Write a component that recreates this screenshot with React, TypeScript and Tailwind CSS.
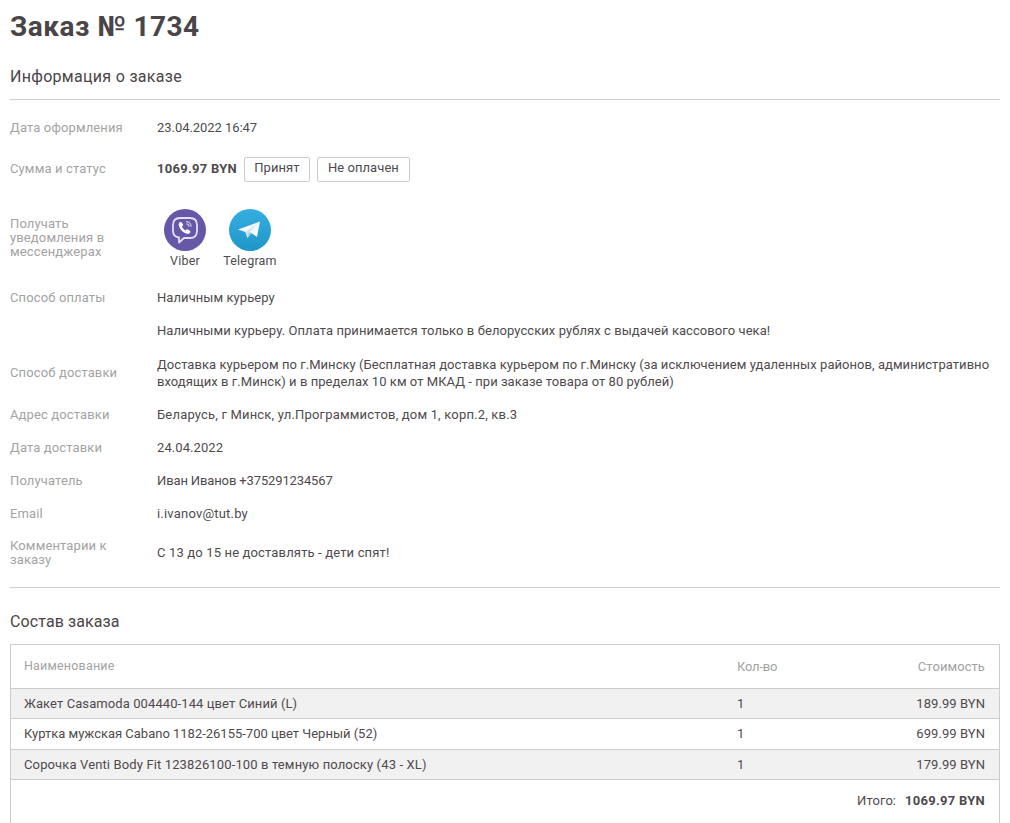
const rowLabel = "w-[147px] shrink-0 pr-[20px] text-[13px] leading-[14px] text-[#a3a3a3] tracking-[0.13px]";

const Row = ({
  label,
  height,
  tracking = "tracking-[0.07px]",
  children,
}: {
  label: string;
  height: string;
  tracking?: string;
  children: React.ReactNode;
}) => (
  <div className={`flex items-center ${height}`}>
    <div className={rowLabel}>{label}</div>
    <div className={`flex-1 text-[13px] leading-[17px] text-[#4f4a4d] ${tracking}`}>{children}</div>
  </div>
);

const items = [
  { name: "Жакет Casamoda 004440-144 цвет Синий (L)", qty: 1, price: "189.99 BYN", tracking: "tracking-[0.09px]" },
  { name: "Куртка мужская Cabano 1182-26155-700 цвет Черный (52)", qty: 1, price: "699.99 BYN", tracking: "tracking-[-0.01px]" },
  { name: "Сорочка Venti Body Fit 123826100-100 в темную полоску (43 - XL)", qty: 1, price: "179.99 BYN", tracking: "tracking-[0.13px]" },
];

const ViberIcon = () => (
  <svg width="42" height="42" viewBox="0 0 42 42">
    <circle cx="21" cy="21" r="21" fill="#6757a8" />
    <path
      d="M16 9h10c4.500 0 7 2.500 7 7v6c0 4.500-2.500 7-7 7h-6l-5 4.500V28.500c-4-.7-6-3-6-6.500v-6c0-4.500 2.500-7 7-7z"
      fill="none"
      stroke="#e4e0f1"
      strokeWidth="1.800"
      strokeLinejoin="round"
    />
    <path
      d="M15.500 13.500c.8-.7 1.700-.6 2.200.1l1.200 1.700c.4.600.3 1.300-.3 1.800l-.7.500c.7 1.800 2 3.100 3.800 3.900l.6-.8c.4-.5 1.100-.6 1.700-.2l1.800 1.200c.7.500.8 1.400.2 2.100-.8 1-1.900 1.400-3.100 1-4.200-1.300-7-4.100-8.100-8.200-.3-1.100 0-2.300.7-3.100z"
      fill="#fff"
    />
    <path d="M22 12.500c3 .2 5 2.200 5.200 5.300M22.300 14.800c1.700.2 2.700 1.200 2.900 2.900" fill="none" stroke="#d5cfe8" strokeWidth="1.100" />
  </svg>
);

const TelegramIcon = () => (
  <svg width="42" height="42" viewBox="0 0 42 42">
    <defs>
      <linearGradient id="tg" x1="0" y1="0" x2="0" y2="1">
        <stop offset="0" stopColor="#37aee2" />
        <stop offset="1" stopColor="#1e96c8" />
      </linearGradient>
    </defs>
    <circle cx="21" cy="21" r="21" fill="url(#tg)" />
    <path d="M16.500 23l2 6 3-3.500z" fill="#c8daea" />
    <path d="M16.500 23l13.500-9.500-8.500 12-3 3.500z" fill="#a9c9dd" />
    <path d="M9 20.500l22-8-3 15.500-8-5.500-3.500 .500z" fill="#f4f9fc" />
    <path d="M16.500 23l12.500-9-9.500 10.500-1 4.500z" fill="#d2e5f1" />
  </svg>
);

const App = () => {
  return (
    <div className="w-[1010px] h-[823px] overflow-hidden bg-white px-[10px] font-['Roboto',sans-serif]">
      <h1 className="pt-[11px] text-[28px] leading-[32px] font-bold text-[#4a4548] tracking-[0.47px]">Заказ № 1734</h1>

      <h2 className="mt-[22px] text-[16px] leading-[24px] text-[#4a4548] tracking-[0.3px]">Информация о заказе</h2>
      <div className="mt-[10px] h-px w-[990px] bg-[#cccccc]" />

      <div className="w-[990px] pt-[11px]">
        <Row label="Дата оформления" height="h-[33px]" tracking="tracking-[-0.05px]">23.04.2022 16:47</Row>

        <div className="mt-[5px] flex h-[39px] items-center">
          <div className={rowLabel}>Сумма и статус</div>
          <div className="flex items-center text-[13px] text-[#4f4a4d] tracking-[0.07px]">
            <span className="font-bold tracking-[0.27px]">1069.97 BYN</span>
            <span className="ml-[7px] mt-[1px] flex h-[25px] w-[66px] items-center justify-center rounded-[2px] border border-[#cccccc] pb-[2px]">Принят</span>
            <span className="ml-[7px] mt-[1px] flex h-[25px] w-[93px] items-center justify-center rounded-[2px] border border-[#cccccc] pb-[2px]">Не оплачен</span>
          </div>
        </div>

        <div className="mt-[21px] flex h-[72px]">
          <div className={`${rowLabel} pt-[8px]`}>
            Получать
            <br />
            уведомления в
            <br />
            мессенджерах
          </div>
          <div className="flex text-[12.5px] leading-[16px] text-[#4f4a4d] tracking-[0.2px]">
            <div className="flex w-[56px] flex-col items-center">
              <ViberIcon />
              <span className="mt-[2px]">Viber</span>
            </div>
            <div className="ml-[9px] flex w-[56px] flex-col items-center">
              <TelegramIcon />
              <span className="mt-[2px]">Telegram</span>
            </div>
          </div>
        </div>

        <Row label="Способ оплаты" height="h-[33px]">Наличным курьеру</Row>
        <Row label="" height="h-[33px]">
          Наличными курьеру. Оплата принимается только в белорусских рублях с выдачей кассового чека!
        </Row>
        <Row label="Способ доставки" height="h-[51px]" tracking="tracking-[0.05px]">
          Доставка курьером по г.Минску (Бесплатная доставка курьером по г.Минску (за исключением удаленных районов, административно входящих в г.Минск) и в пределах 10 км от МКАД - при заказе товара от 80 рублей)
        </Row>
        <Row label="Адрес доставки" height="h-[33px]" tracking="tracking-[0.18px]">Беларусь, г Минск, ул.Программистов, дом 1, корп.2, кв.3</Row>
        <Row label="Дата доставки" height="h-[33px]">24.04.2022</Row>
        <Row label="Получатель" height="h-[33px]" tracking="tracking-[-0.13px]">Иван Иванов +375291234567</Row>
        <Row label="Email" height="h-[33px]" tracking="tracking-[0.2px]">i.ivanov@tut.by</Row>
        <Row label="Комментарии к заказу" height="h-[45px]" tracking="tracking-[0.15px]">С 13 до 15 не доставлять - дети спят!</Row>
      </div>

      <div className="mt-[12px] h-px w-[990px] bg-[#cccccc]" />

      <h2 className="mt-[22px] text-[16px] leading-[24px] text-[#4a4548] tracking-[0.1px]">Состав заказа</h2>

      <div className="mt-[10px] w-[990px] border border-[#cccccc] text-[13px] tracking-[0.07px] text-[#4f4a4d]">
        <div className="flex h-[43px] items-center pl-[13px] pr-[14px] text-[#a3a3a3]">
          <div className="w-[713px] text-[12.5px] tracking-[0.2px]">Наименование</div>
          <div className="w-[60px] tracking-[-0.2px]">Кол-во</div>
          <div className="flex-1 text-right">Стоимость</div>
        </div>
        {items.map((item, i) => (
          <div
            key={item.name}
            className={`flex h-[30.4px] items-center border-t border-[#cccccc] pl-[13px] pr-[14px] ${i % 2 === 0 ? "bg-[#f1f1f1]" : "bg-white"}`}
          >
            <div className={`w-[713px] ${item.tracking}`}>{item.name}</div>
            <div className="w-[60px]">{item.qty}</div>
            <div className="flex-1 text-right">{item.price}</div>
          </div>
        ))}
        <div className="flex h-[60px] items-start justify-end border-t border-[#cccccc] pr-[14px] pt-[11px]">
          <span>Итого:</span>
          <span className="ml-[9px] font-bold tracking-[0.27px]">1069.97 BYN</span>
        </div>
      </div>
    </div>
  );
};

export default App;
